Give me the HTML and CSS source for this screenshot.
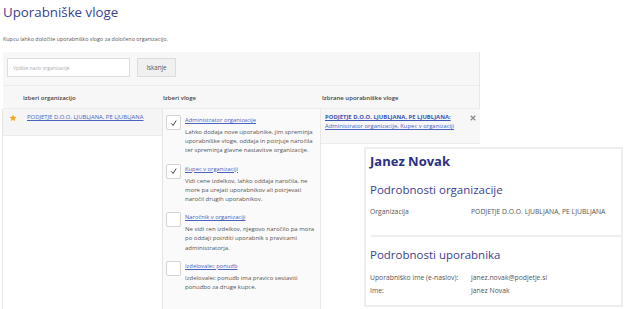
FILE: index.html
```html
<!DOCTYPE html>
<html lang="sl">
<head>
<meta charset="utf-8">
<title>Uporabniške vloge</title>
<link rel="stylesheet" href="styles.css">
</head>
<body>
<div class="page">
  <h1 class="title">Uporabniške vloge</h1>
  <p class="desc">Kupcu lahko določite uporabniško vlogo za določeno organizacijo.</p>
  <div class="panel">
    <div class="search">
      <input class="search-input" type="text" placeholder="Vpišite naziv organizacije">
      <button class="search-btn" type="button">Iskanje</button>
    </div>
    <div class="grid">
      <div class="head head-org">Izberi organizacijo</div>
      <div class="head head-role">Izberi vloge</div>
      <div class="head head-sel">Izbrane uporabniške vloge</div>

      <div class="col col-org">
        <div class="org-item">
          <svg class="star" viewBox="0 0 24 24" width="8" height="8"><path d="M12 1.5l3.1 6.9 7.4.7-5.6 5 1.7 7.4L12 17.6l-6.6 3.9 1.7-7.4-5.6-5 7.4-.7z" fill="#f5a623"/></svg>
          <a class="link" href="#">PODJETJE D.O.O. LJUBLJANA, PE LJUBLJANA</a>
        </div>
      </div>

      <div class="col col-role">
        <div class="role">
          <span class="cb checked"><svg viewBox="0 0 14 14" width="14" height="14"><path d="M4.6 7.4l1.9 2.2 3.4-5.2" fill="none" stroke="#333" stroke-width="1"/></svg></span>
          <div class="role-body">
            <a class="link" href="#">Administrator organizacije</a>
            <p class="role-desc">Lahko dodaja nove uporabnike, jim spreminja uporabniške vloge, oddaja in potrjuje naročila ter spreminja glavne nastavitve organizacije.</p>
          </div>
        </div>
        <div class="role">
          <span class="cb checked"><svg viewBox="0 0 14 14" width="14" height="14"><path d="M4.6 7.4l1.9 2.2 3.4-5.2" fill="none" stroke="#333" stroke-width="1"/></svg></span>
          <div class="role-body">
            <a class="link" href="#">Kupec v organizaciji</a>
            <p class="role-desc">Vidi cene izdelkov, lahko oddaja naročila, ne more pa urejati uporabnikov ali potrjevati naročil drugih uporabnikov.</p>
          </div>
        </div>
        <div class="role">
          <span class="cb"></span>
          <div class="role-body">
            <a class="link" href="#">Naročnik v organizaciji</a>
            <p class="role-desc">Ne vidi cen izdelkov, njegovo naročilo pa mora po oddaji potrditi uporabnik s pravicami administratorja.</p>
          </div>
        </div>
        <div class="role">
          <span class="cb"></span>
          <div class="role-body">
            <a class="link" href="#">Izdelovalec ponudb</a>
            <p class="role-desc">Izdelovalec ponudb ima pravico sestaviti ponudbo za druge kupce.</p>
          </div>
        </div>
      </div>

      <div class="col col-sel">
        <div class="sel-item">
          <div class="sel-text">
            <a class="link link-bold" href="#">PODJETJE D.O.O. LJUBLJANA, PE LJUBLJANA:</a>
            <a class="link" href="#">Administrator organizacije, Kupec v organizaciji</a>
          </div>
          <svg class="close" viewBox="0 0 8 8" width="6" height="6"><path d="M1 1l6 6M7 1L1 7" stroke="#8a8a8a" stroke-width="1.8"/></svg>
        </div>
      </div>
    </div>
  </div>

  <div class="card">
    <h2 class="card-name">Janez Novak</h2>
    <h3 class="card-h card-h-org">Podrobnosti organizacije</h3>
    <div class="card-row row-org"><span class="card-label">Organizacija</span><span class="card-val">PODJETJE D.O.O. LJUBLJANA, PE LJUBLJANA</span></div>
    <div class="card-sep"></div>
    <h3 class="card-h card-h-user">Podrobnosti uporabnika</h3>
    <div class="card-row row-user"><span class="card-label">Uporabniško ime (e-naslov):</span><span class="card-val">janez.novak@podjetje.si</span></div>
    <div class="card-row row-name"><span class="card-label">Ime:</span><span class="card-val">Janez Novak</span></div>
  </div>
</div>
</body>
</html>
```

FILE: styles.css
```css
* { box-sizing: border-box; }
html, body { margin: 0; padding: 0; background: #fff; }
body { font-family: "Open Sans", "Noto Sans", sans-serif; color: #555; overflow: hidden; }

.page { position: relative; padding: 0 0 0 3px; width: 625px; height: 309px; }

.title {
  margin: 0; padding-top: 3px;
  font-size: 13.3px; font-weight: 400; color: #3b3f8e;
  line-height: 18px;
}
.desc { margin: 14px 0 0; font-size: 5.4px; line-height: 8px; color: #555; }

.panel {
  margin-top: 9px; width: 477px; height: 260px;
  background: #f7f7f7;
  border-right: 1px solid #e8e8e8;
}
.search { display: flex; gap: 7px; padding: 6px 0 0 4px; height: 33px; }
.search-input {
  width: 123px; height: 19px; margin: 0;
  border: 1px solid #dcdcdc; background: #fff;
  font-family: inherit; font-size: 4.9px; padding: 0 5px; color: #555;
}
.search-input::placeholder { color: #aaa; }
.search-btn {
  width: 39px; height: 19px; margin: 0; padding: 0;
  border: 1px solid #dcdcdc; background: #f0f0f0;
  font-family: inherit; font-size: 6.2px; color: #555;
}

.grid {
  display: grid;
  grid-template-columns: 159px 158px 160px;
  grid-template-rows: 23px 1fr;
  height: 227px;
  border-top: 1px solid #ececec;
}
.head {
  font-size: 6px; font-weight: 600; color: #444;
  display: flex; align-items: center; padding-top: 1px;
  border-bottom: 1px solid #ececec;
}
.head-org { padding-left: 20px; }
.head-role { padding-left: 1px; }
.head-sel { padding-left: 2px; }

.link { color: #4a63bf; text-decoration: underline; font-size: 5.8px; line-height: 9px; }
.link-bold { font-weight: 700; color: #3b55b4; }

.col-org { background: #fff; border-left: 1px solid #e6e6e6; margin-left: -1px; }
.org-item {
  display: flex; align-items: center; gap: 10px;
  height: 27px; padding: 0 0 9px 6px;
  background: #f5f5f5; border-bottom: 1px solid #ececec;
}
.org-item .link { font-size: 5.9px; }
.star { flex: none; }

.col-role { background: #fafafa; border-left: 1px solid #e4e4e4; padding: 4px 3px 0 3px; }
.role { display: flex; gap: 4px; margin-bottom: 6px; }
.cb {
  flex: none; width: 15px; height: 15px; margin-top: 2px;
  border: 1px solid #d4d4d4; border-radius: 2px; background: #fff;
  display: flex; align-items: center; justify-content: center;
}
.cb svg { display: block; }
.role-body { display: flex; flex-direction: column; padding-top: 3px; }
.role-desc { margin: 3px 0 0; font-size: 6px; line-height: 9.2px; color: #555; }

.col-sel { background: #fff; border-left: 1px solid #e8e8e8; }
.sel-item {
  display: flex; justify-content: space-between; align-items: flex-start;
  height: 35px; padding: 4px 4px 0 4px;
  background: #f7f7f7; border-bottom: 1px solid #ececec;
}
.sel-text { display: flex; flex-direction: column; }
.sel-text .link { line-height: 9px; font-size: 5.9px; }
.close { margin-top: 2px; }

.card {
  position: absolute; left: 364px; top: 147px;
  width: 259px; height: 160px;
  background: #fff; border: 2px solid #eeeeee;
  padding: 2px 0 0 4px;
}
.card-name { margin: 0; font-size: 13px; font-weight: 700; color: #2c2f80; line-height: 20px; }
.card-h { font-size: 11.5px; font-weight: 400; color: #3b3f8e; line-height: 18px; }
.card-h-org { margin: 10px 0 0; }
.card-h-user { margin: 9px 0 0; }
.card-row { display: flex; font-size: 6.8px; line-height: 9px; color: #555; }
.row-org { margin-top: 8px; }
.row-user { margin-top: 9px; }
.row-name { margin-top: 4px; }
.card-label { width: 101px; flex: none; }
.card-sep { height: 2px; background: #eee; margin: 19px 0 0 1px; }
```
